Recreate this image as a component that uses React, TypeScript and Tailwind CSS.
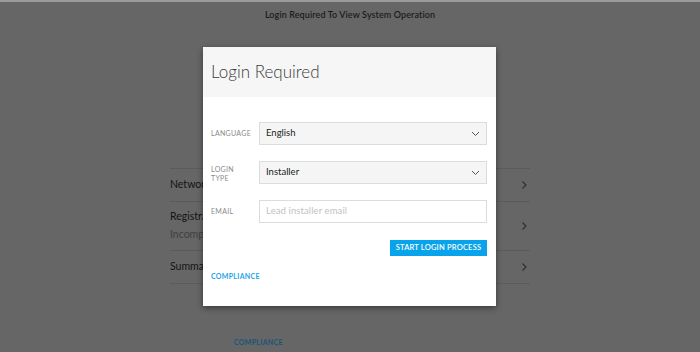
import React from "react";

const Chevron = () => (
  <svg width="8" height="10" viewBox="0 0 8 10" fill="none">
    <path d="M2.5 1.5 L6 5 L2.5 8.5" stroke="#2e2e2e" strokeWidth="1.1" />
  </svg>
);

const Down = () => (
  <svg width="9" height="6" viewBox="0 0 9 6" fill="none">
    <path d="M1 1 L4.5 4.5 L8 1" stroke="#555" strokeWidth="1" />
  </svg>
);

export default function App() {
  return (
    <div
      className="relative w-[700px] h-[352px] overflow-hidden bg-[#666666]"
      style={{ fontFamily: "Lato, 'Open Sans', sans-serif" }}
    >
      <div className="h-[2px] bg-[#9a9a9a]" />
      <div className="pt-[6px] text-center text-[9px] font-semibold text-[#1c1c1c] tracking-[0.1px]">
        Login Required To View System Operation
      </div>
      <div className="w-[360px] mt-[146px] border-t border-[#5b5b5b] ml-[170px]">
        <div className="flex items-center justify-between h-[33px] border-b border-[#5b5b5b] pr-[2px]">
          <span className="text-[10.5px] text-[#141414]">Network</span>
          <Chevron />
        </div>
        <div className="flex items-center justify-between h-[49px] border-b border-[#5b5b5b] pr-[2px]">
          <div className="flex flex-col gap-[2px] pt-[1px]">
            <span className="text-[10.5px] text-[#141414]">Registration</span>
            <span className="text-[10.5px] text-[#3f3f3f]">Incomplete</span>
          </div>
          <Chevron />
        </div>
        <div className="flex items-center justify-between h-[33px] border-b border-[#5b5b5b] pr-[2px]">
          <span className="text-[10.5px] text-[#141414]">Summary</span>
          <Chevron />
        </div>
      </div>
      <div className="ml-[234px] mt-[53px] text-[7px] font-bold tracking-[0.3px] text-[#1d5477]">
        COMPLIANCE
      </div>

      <div className="absolute left-[203px] top-[47px] w-[293px] h-[259px] bg-white shadow-[0_2px_6px_rgba(0,0,0,0.45)] flex flex-col">
        <div className="h-[50px] bg-[#f6f6f6] flex items-center pl-[8px]">
          <span className="text-[17px] font-light text-[#3a3a3a]">Login Required</span>
        </div>
        <div className="flex flex-col pl-[8px] pr-[9px] pt-[25px]">
          <div className="flex items-center">
            <div className="w-[48px] text-[7px] tracking-[0.3px] text-[#8a8a8a]">LANGUAGE</div>
            <div className="flex-1 h-[23px] bg-[#f5f5f5] border border-[#dcdcdc] flex items-center justify-between pl-[6px] pr-[6px]">
              <span className="text-[9.5px] text-[#222]">English</span>
              <Down />
            </div>
          </div>
          <div className="flex items-start mt-[16px]">
            <div className="w-[48px] pt-[4px] text-[7px] leading-[9px] tracking-[0.3px] text-[#8a8a8a]">
              LOGIN
              <br />
              TYPE
            </div>
            <div className="flex-1 h-[23px] bg-[#f5f5f5] border border-[#dcdcdc] flex items-center justify-between pl-[6px] pr-[6px]">
              <span className="text-[9.5px] text-[#222]">Installer</span>
              <Down />
            </div>
          </div>
          <div className="flex items-center mt-[16px]">
            <div className="w-[48px] text-[7px] tracking-[0.3px] text-[#8a8a8a]">EMAIL</div>
            <div className="flex-1 h-[23px] bg-white border border-[#dcdcdc] flex items-center pl-[6px]">
              <span className="text-[9.5px] text-[#c2c2c2] tracking-[0.1px]">Lead installer email</span>
            </div>
          </div>
          <div className="flex justify-end mt-[17px]">
            <div className="w-[97px] h-[16px] bg-[#08a3ea] flex items-center justify-center text-[7.5px] font-semibold tracking-[0.2px] text-white">
              START LOGIN PROCESS
            </div>
          </div>
          <div className="mt-[15px] text-[7px] font-bold tracking-[0.3px] text-[#1ea3e6]">COMPLIANCE</div>
        </div>
      </div>
    </div>
  );
}
